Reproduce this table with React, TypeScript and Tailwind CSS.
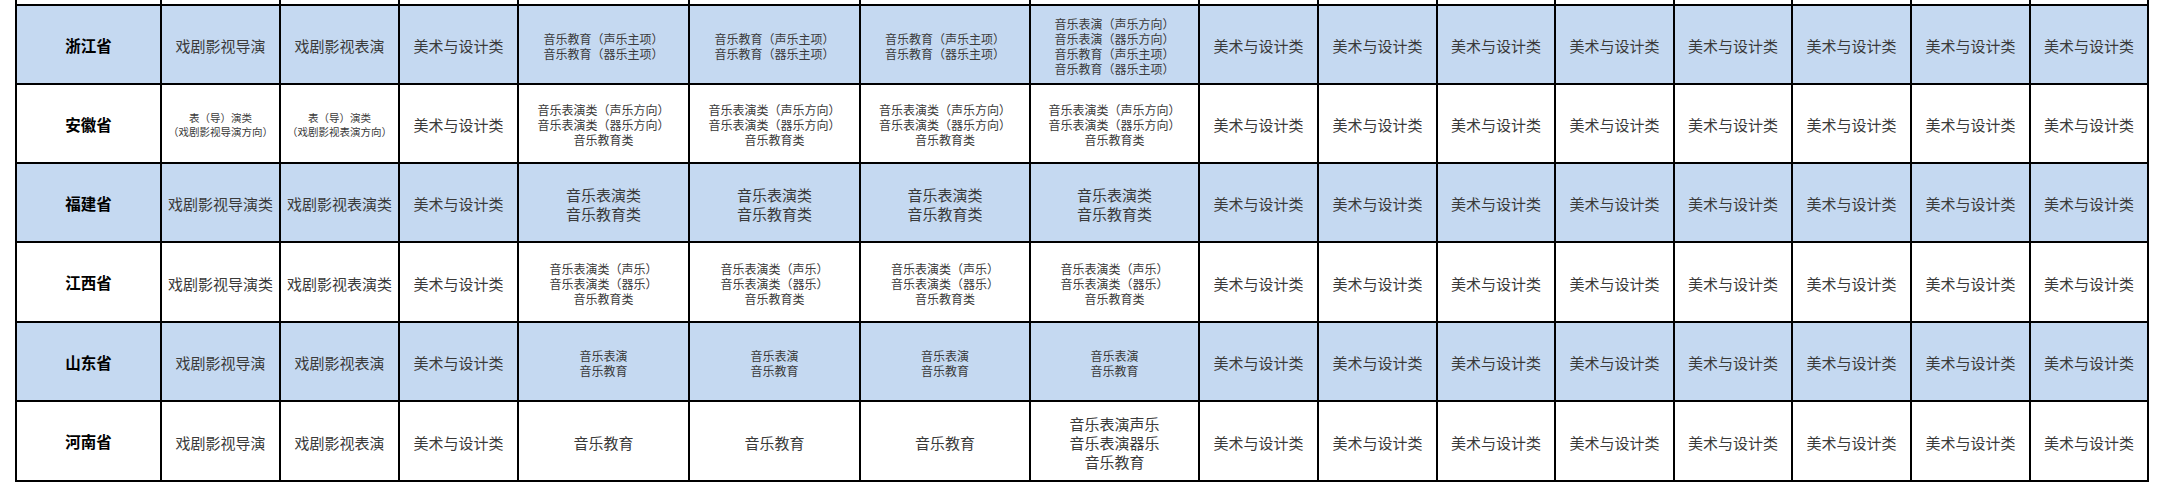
import React from "react";

type Cell = { lines: string[]; size: "lg" | "sm" | "xs" };

const L = (s: string): Cell => ({ lines: [s], size: "lg" });
const LG = (...s: string[]): Cell => ({ lines: s, size: "lg" });
const SM = (...s: string[]): Cell => ({ lines: s, size: "sm" });
const XS = (...s: string[]): Cell => ({ lines: s, size: "xs" });

const ART = L("美术与设计类");
const arts = (): Cell[] => Array.from({ length: 8 }, () => ART);

type Row = { name: string; blue: boolean; cells: Cell[] };

const rows: Row[] = [
  {
    name: "浙江省",
    blue: true,
    cells: [
      L("戏剧影视导演"),
      L("戏剧影视表演"),
      ART,
      SM("音乐教育（声乐主项）", "音乐教育（器乐主项）"),
      SM("音乐教育（声乐主项）", "音乐教育（器乐主项）"),
      SM("音乐教育（声乐主项）", "音乐教育（器乐主项）"),
      SM("音乐表演（声乐方向）", "音乐表演（器乐方向）", "音乐教育（声乐主项）", "音乐教育（器乐主项）"),
      ...arts(),
    ],
  },
  {
    name: "安徽省",
    blue: false,
    cells: [
      XS("表（导）演类", "（戏剧影视导演方向）"),
      XS("表（导）演类", "（戏剧影视表演方向）"),
      ART,
      SM("音乐表演类（声乐方向）", "音乐表演类（器乐方向）", "音乐教育类"),
      SM("音乐表演类（声乐方向）", "音乐表演类（器乐方向）", "音乐教育类"),
      SM("音乐表演类（声乐方向）", "音乐表演类（器乐方向）", "音乐教育类"),
      SM("音乐表演类（声乐方向）", "音乐表演类（器乐方向）", "音乐教育类"),
      ...arts(),
    ],
  },
  {
    name: "福建省",
    blue: true,
    cells: [
      L("戏剧影视导演类"),
      L("戏剧影视表演类"),
      ART,
      LG("音乐表演类", "音乐教育类"),
      LG("音乐表演类", "音乐教育类"),
      LG("音乐表演类", "音乐教育类"),
      LG("音乐表演类", "音乐教育类"),
      ...arts(),
    ],
  },
  {
    name: "江西省",
    blue: false,
    cells: [
      L("戏剧影视导演类"),
      L("戏剧影视表演类"),
      ART,
      SM("音乐表演类（声乐）", "音乐表演类（器乐）", "音乐教育类"),
      SM("音乐表演类（声乐）", "音乐表演类（器乐）", "音乐教育类"),
      SM("音乐表演类（声乐）", "音乐表演类（器乐）", "音乐教育类"),
      SM("音乐表演类（声乐）", "音乐表演类（器乐）", "音乐教育类"),
      ...arts(),
    ],
  },
  {
    name: "山东省",
    blue: true,
    cells: [
      L("戏剧影视导演"),
      L("戏剧影视表演"),
      ART,
      SM("音乐表演", "音乐教育"),
      SM("音乐表演", "音乐教育"),
      SM("音乐表演", "音乐教育"),
      SM("音乐表演", "音乐教育"),
      ...arts(),
    ],
  },
  {
    name: "河南省",
    blue: false,
    cells: [
      L("戏剧影视导演"),
      L("戏剧影视表演"),
      ART,
      L("音乐教育"),
      L("音乐教育"),
      L("音乐教育"),
      LG("音乐表演声乐", "音乐表演器乐", "音乐教育"),
      ...arts(),
    ],
  },
];

const sizeClass: Record<Cell["size"], string> = {
  lg: "text-[15px] leading-[19px]",
  sm: "text-[12px] leading-[15px]",
  xs: "text-[10.5px] leading-[14px]",
};

export default function App() {
  return (
    <div
      className="w-[2165px] h-[491px] bg-white overflow-hidden pl-[15px]"
      style={{ fontFamily: '"Noto Sans CJK SC", "Noto Sans", sans-serif' }}
    >
      <div className="w-fit grid bg-black gap-[2px] px-[2px] pb-[2px] grid-cols-[143px_117px_117px_117px_169px_169px_168px_167px_117px_117px_116px_117px_116px_117px_117px_116px] grid-rows-[4px_77px_77px_77px_78px_77px_78px]">
        {Array.from({ length: 16 }, (_, i) => (
          <div key={`top-${i}`} className="bg-white" />
        ))}
        {rows.map((row) => (
          <React.Fragment key={row.name}>
            <div
              className={`${row.blue ? "bg-[#c5d9f1]" : "bg-white"} flex items-center justify-center text-[15.5px] font-bold text-black pt-[2px]`}
            >
              {row.name}
            </div>
            {row.cells.map((c, j) => (
              <div
                key={j}
                className={`${row.blue ? "bg-[#c5d9f1]" : "bg-white"} flex flex-col items-center justify-center text-center text-[#3a3a3a] whitespace-nowrap pt-[2px] ${sizeClass[c.size]}`}
              >
                {c.lines.map((ln, k) => (
                  <div key={k}>{ln}</div>
                ))}
              </div>
            ))}
          </React.Fragment>
        ))}
      </div>
    </div>
  );
}
